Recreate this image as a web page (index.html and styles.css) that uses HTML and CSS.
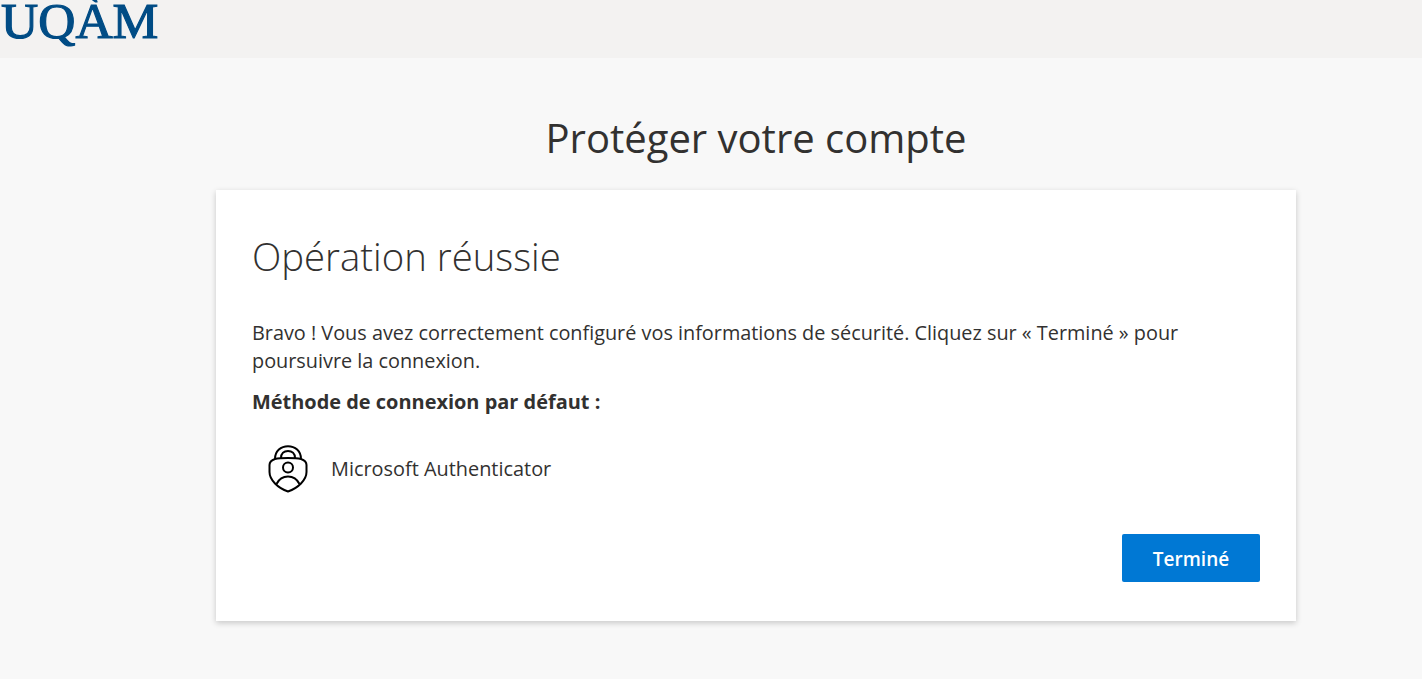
FILE: index.html
```html
<!DOCTYPE html>
<html lang="fr">
<head>
<meta charset="utf-8">
<title>Protéger votre compte</title>
<link rel="stylesheet" href="styles.css">
</head>
<body>
<header class="topbar"><span class="logo">UQÀM</span></header>
<main class="main">
  <h1 class="title">Protéger votre compte</h1>
  <section class="card">
    <h2 class="card-title">Opération réussie</h2>
    <p class="message">Bravo ! Vous avez correctement configuré vos informations de sécurité. Cliquez sur « Terminé » pour poursuivre la connexion.</p>
    <p class="label">Méthode de connexion par défaut :</p>
    <div class="method">
      <svg class="method-icon" width="40" height="48" viewBox="0 0 40 48" fill="none" stroke="#000" stroke-width="2" aria-hidden="true">
        <path d="M7 14C11 13 16 13 20 13C24 13 29 13 33 14C36 15 38.500 17 38.500 20V27C38.500 35 30 43 20 46.500C10 43 1.500 35 1.500 27V20C1.500 17 4 15 7 14Z"/>
        <path d="M7 14C7 6 13 1.200 20 1.200C27 1.200 33 6 33 14"/>
        <path d="M13 13C13 8.500 16 6 20 6C24 6 27 8.500 27 13"/>
        <circle cx="20" cy="22.500" r="5"/>
        <path d="M8.500 39C11 34 15 31.500 20 31.500C25 31.500 29 34 31.500 39"/>
      </svg>
      <span class="method-name">Microsoft Authenticator</span>
    </div>
    <div class="actions"><button class="done" type="button">Terminé</button></div>
  </section>
</main>
</body>
</html>
```
FILE: styles.css
```css
* { box-sizing: border-box; }
html, body { margin: 0; height: 100%; }
body {
  background: #f8f8f8;
  color: #323130;
  font-family: "Open Sans", "Noto Sans", sans-serif;
  overflow: hidden;
}
.topbar {
  height: 58px;
  background: #f3f2f1;
  overflow: hidden;
  padding-left: 1px;
}
.logo {
  display: block;
  font-family: "Liberation Serif", serif;
  font-weight: 400;
  font-size: 51.5px;
  line-height: 42px;
  color: #004c85;
  -webkit-text-stroke: 1.2px #004c85;
}
.main {
  display: flex;
  flex-direction: column;
  align-items: center;
  padding-left: 90px;
}
.title {
  margin: 53px 0 26px;
  font-size: 40px;
  line-height: 53px;
  font-weight: 400;
}
.card {
  width: 1080px;
  height: 431px;
  background: #fff;
  box-shadow: 0 2px 6px rgba(0, 0, 0, 0.2);
  padding: 40px 36px 39px 36px;
  display: flex;
  flex-direction: column;
}
.card-title {
  margin: 0 0 37px;
  font-size: 38.3px;
  line-height: 52px;
  font-weight: 300;
}
.message {
  margin: 0 0 13px;
  font-size: 19.85px;
  line-height: 28px;
}
.label {
  margin: 0 0 29px;
  font-size: 19.95px;
  line-height: 28px;
  font-weight: 700;
}
.method {
  display: flex;
  align-items: center;
  gap: 23px;
  padding-left: 16px;
}
.method-icon { display: block; }
.method-name { font-size: 19.9px; line-height: 28px; }
.actions {
  margin-top: auto;
  display: flex;
  justify-content: flex-end;
}
.done {
  width: 138px;
  height: 48px;
  border: 0;
  border-radius: 2px;
  padding: 2px 0 0;
  background: #0078d4;
  color: #fff;
  font-family: inherit;
  font-size: 19px;
  font-weight: 600;
}
```
